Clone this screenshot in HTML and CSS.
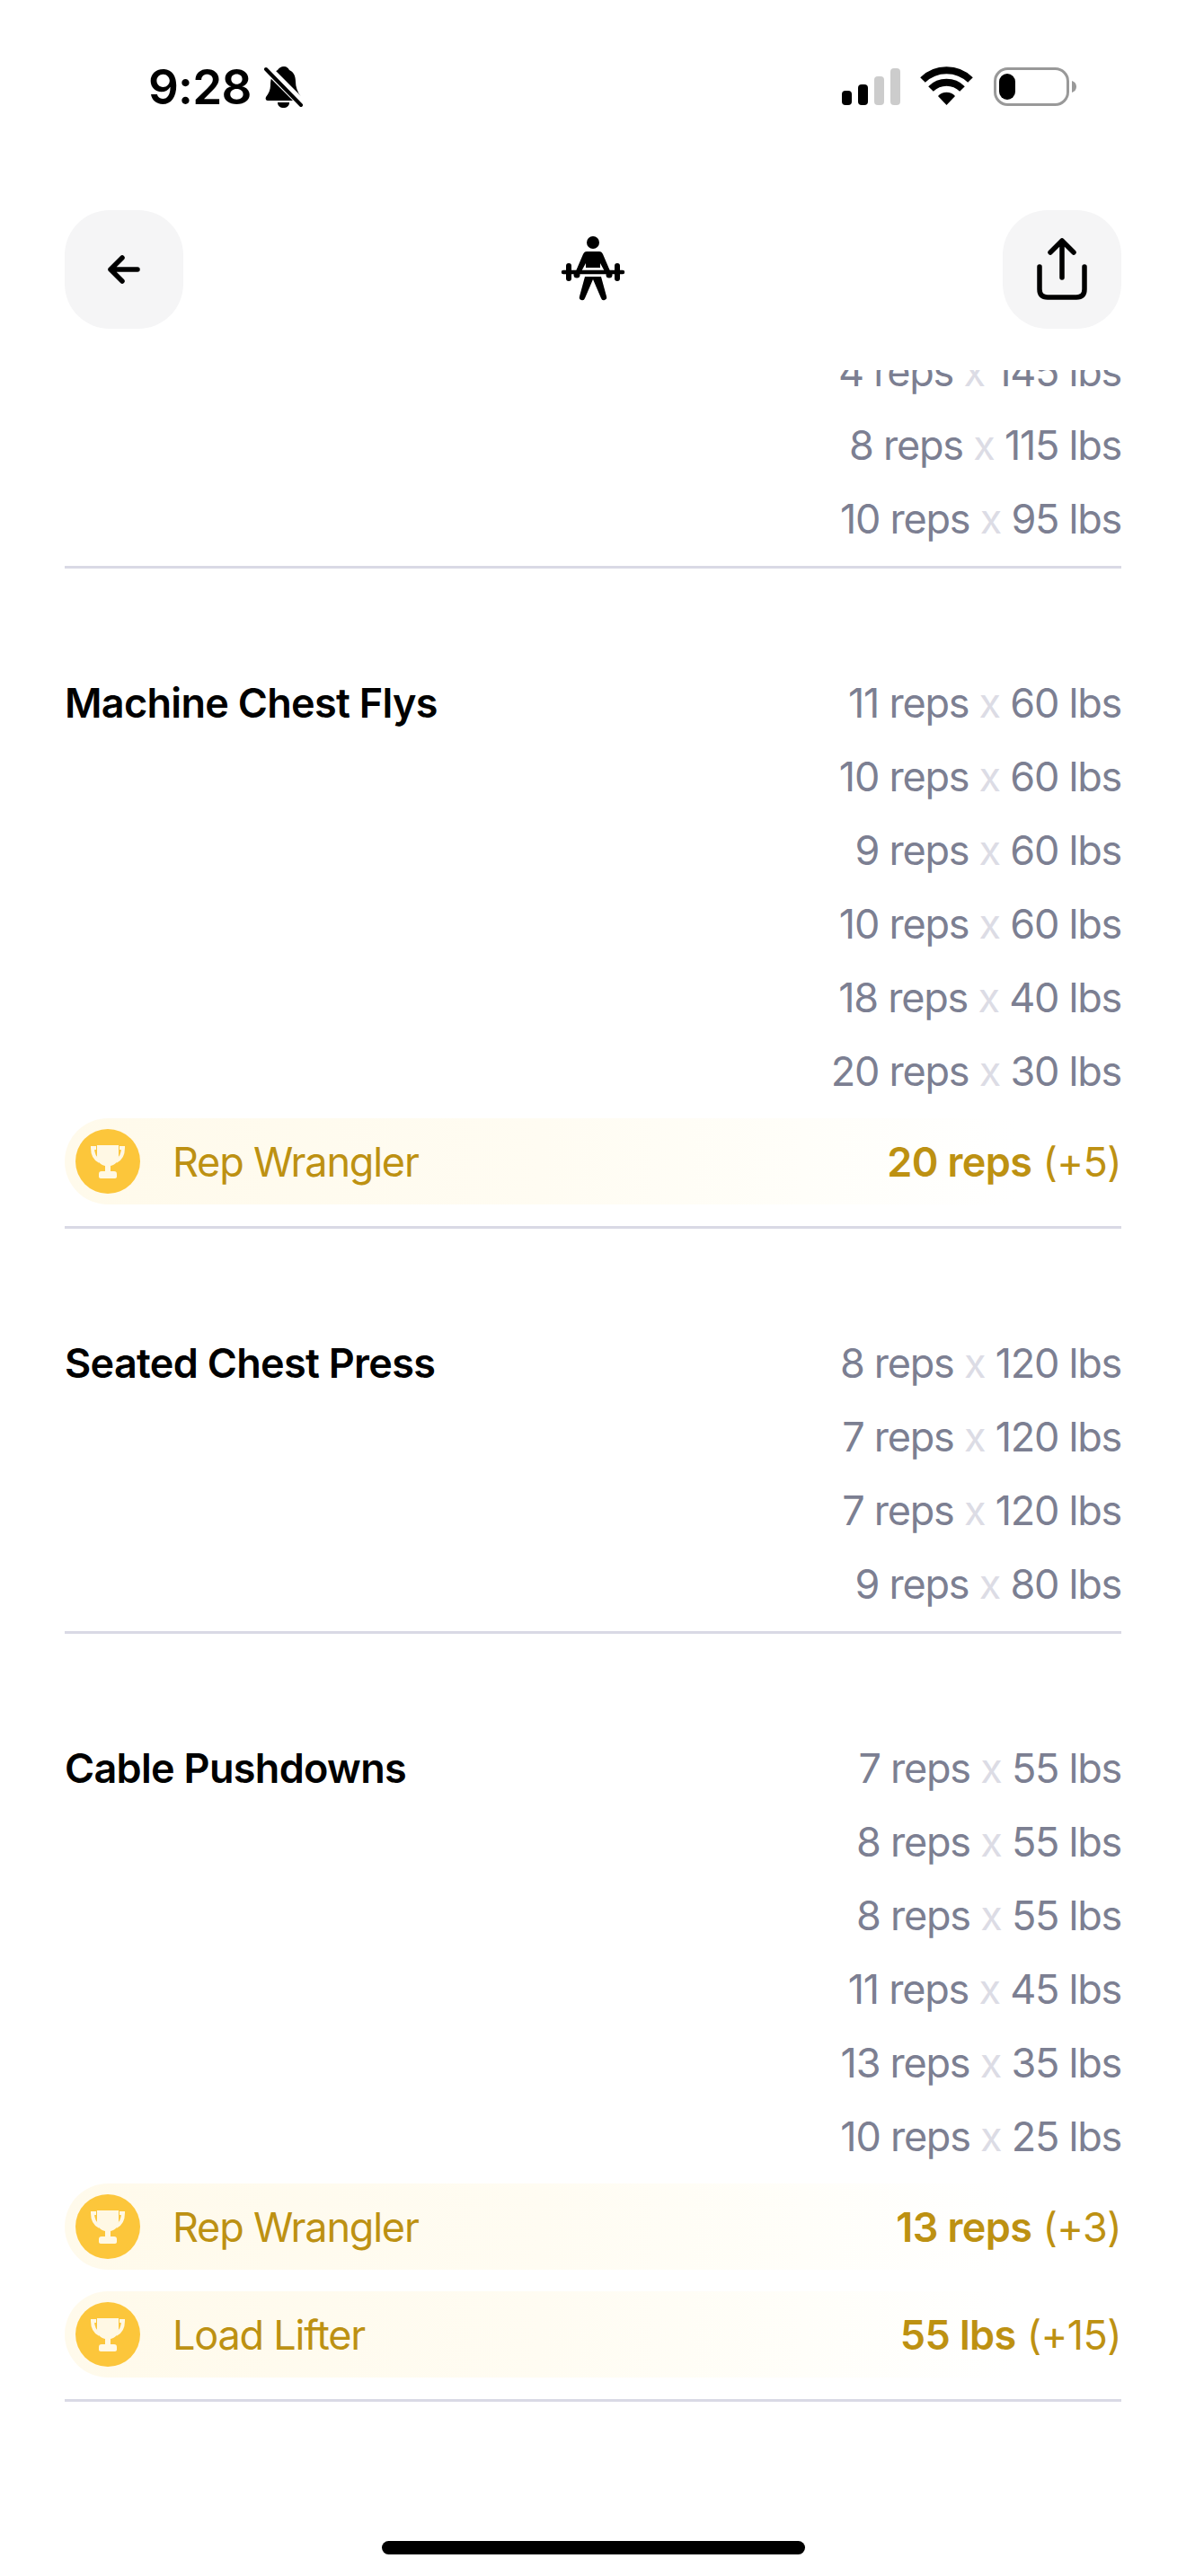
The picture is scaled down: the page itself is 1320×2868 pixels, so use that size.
FILE: index.html
```html
<!DOCTYPE html>
<html lang="en">
<head>
    <meta charset="UTF-8">
    <meta name="viewport" content="width=device-width, initial-scale=1.0">
    <title>Workout</title>
    <link rel="stylesheet" href="styles.css">
</head>
<body>
    <div class="page">
        <div class="status-bar">
            <div class="status-left">
                <span class="time">9:28</span>
                <svg class="bell" width="44" height="48" viewBox="0 0 44 48">
                    <path d="M22 1c3 0 5 2 6 4 5 2 7 7 7 13 0 6 2 11 6 17 1 2 0 4-2 4H4c-2 0-3-2-2-4 3-4 5-8 5-13 0-7 2-14 8-17 1-2 4-4 7-4z" fill="#000"/>
                    <path d="M15 41h13c0 4-3 6-6.500 6S15 45 15 41z" fill="#000"/>
                    <path d="M1 1l42 42" stroke="#fff" stroke-width="10"/>
                    <path d="M2 4l39 40" stroke="#000" stroke-width="4" stroke-linecap="round"/>
                </svg>
            </div>
            <svg class="status-right" width="262" height="50" viewBox="0 0 262 50">
                <rect x="0" y="29" width="11" height="16" rx="4" fill="#000"/>
                <rect x="18" y="22" width="11" height="23" rx="4" fill="#000"/>
                <rect x="36" y="13" width="11" height="32" rx="4" fill="#ccc"/>
                <rect x="54" y="4" width="11" height="41" rx="4" fill="#ccc"/>
                <path d="M90 17a38 38 0 0 1 53 0" fill="none" stroke="#000" stroke-width="8"/>
                <path d="M99 27a25 25 0 0 1 35 0" fill="none" stroke="#000" stroke-width="8"/>
                <path d="M107 35a13 13 0 0 1 19 0l-9.500 10z" fill="#000"/>
                <rect x="170.500" y="4.500" width="81" height="40" rx="14" fill="none" stroke="#999" stroke-width="3"/>
                <rect x="175" y="10" width="18" height="29" rx="9" fill="#000"/>
                <path d="M256 18c3 1 5 3 5 6.500s-2 5.500-5 6.500z" fill="#999"/>
            </svg>
        </div>

        <div class="top-bar">
            <button class="icon-btn">
                <svg width="44" height="36" viewBox="0 0 44 36">
                    <path d="M37 18H7M20 5L7 18l13 13" fill="none" stroke="#000" stroke-width="5.500" stroke-linecap="round" stroke-linejoin="round"/>
                </svg>
            </button>
            <svg class="lifter" width="80" height="80" viewBox="620 260 80 80">
                <circle cx="660" cy="270" r="7" fill="#000"/>
                <path d="M653 280h14c2 0 3 1 4 3l9 21h-6l-6-11v5h-16v-5l-6 11h-6l9-21c1-2 2-3 4-3z" fill="#000"/>
                <path d="M627 303h66" stroke="#000" stroke-width="4.500" stroke-linecap="round"/>
                <rect x="630" y="293" width="6" height="20" rx="3" fill="#000"/>
                <rect x="684" y="293" width="6" height="20" rx="3" fill="#000"/>
                <circle cx="642" cy="306" r="3.500" fill="#000"/>
                <circle cx="678" cy="306" r="3.500" fill="#000"/>
                <path d="M651 308h18l6 22a3 3 0 0 1-6 2l-9-21-9 21a3 3 0 0 1-6-2z" fill="#000"/>
            </svg>
            <button class="icon-btn">
                <svg width="60" height="72" viewBox="0 0 60 72">
                    <path d="M30 4v41M17 17L30 4l13 13" fill="none" stroke="#000" stroke-width="5.500" stroke-linecap="round" stroke-linejoin="round"/>
                    <path d="M5 33v25c0 6 3 9 9 9h32c6 0 9-3 9-9V33" fill="none" stroke="#000" stroke-width="5.500" stroke-linecap="round"/>
                </svg>
            </button>
        </div>

        <div class="log">
            <div class="log-inner">
                <section class="exercise">
                    <div class="exercise-main">
                        <div class="name"></div>
                        <div class="sets">
                            <div>4 reps <span class="times">x</span> 145 lbs</div>
                            <div>8 reps <span class="times">x</span> 115 lbs</div>
                            <div>10 reps <span class="times">x</span> 95 lbs</div>
                        </div>
                    </div>
                </section>

                <section class="exercise">
                    <div class="exercise-main">
                        <div class="name">Machine Chest Flys</div>
                        <div class="sets">
                            <div>11 reps <span class="times">x</span> 60 lbs</div>
                            <div>10 reps <span class="times">x</span> 60 lbs</div>
                            <div>9 reps <span class="times">x</span> 60 lbs</div>
                            <div>10 reps <span class="times">x</span> 60 lbs</div>
                            <div>18 reps <span class="times">x</span> 40 lbs</div>
                            <div>20 reps <span class="times">x</span> 30 lbs</div>
                        </div>
                    </div>
                    <div class="records">
                        <div class="record">
                            <span class="medal">
                                <svg width="40" height="38" viewBox="0 0 40 38">
                                    <path d="M8 1h24v12c0 6-4 10-9 11v6h4c2 0 3 1 3 3v3c0 1-1 2-2 2H12c-1 0-2-1-2-2v-3c0-2 1-3 3-3h4v-6C12 23 8 19 8 13z" fill="#fff8e4"/>
                                    <path d="M7 4H3c0 7 2 12 8 15M33 4h4c0 7-2 12-8 15" fill="none" stroke="#fff8e4" stroke-width="4"/>
                                </svg>
                            </span>
                            <span class="record-name">Rep Wrangler</span>
                            <span class="record-value"><b>20 reps</b> (+5)</span>
                        </div>
                    </div>
                </section>

                <section class="exercise">
                    <div class="exercise-main">
                        <div class="name">Seated Chest Press</div>
                        <div class="sets">
                            <div>8 reps <span class="times">x</span> 120 lbs</div>
                            <div>7 reps <span class="times">x</span> 120 lbs</div>
                            <div>7 reps <span class="times">x</span> 120 lbs</div>
                            <div>9 reps <span class="times">x</span> 80 lbs</div>
                        </div>
                    </div>
                </section>

                <section class="exercise">
                    <div class="exercise-main">
                        <div class="name">Cable Pushdowns</div>
                        <div class="sets">
                            <div>7 reps <span class="times">x</span> 55 lbs</div>
                            <div>8 reps <span class="times">x</span> 55 lbs</div>
                            <div>8 reps <span class="times">x</span> 55 lbs</div>
                            <div>11 reps <span class="times">x</span> 45 lbs</div>
                            <div>13 reps <span class="times">x</span> 35 lbs</div>
                            <div>10 reps <span class="times">x</span> 25 lbs</div>
                        </div>
                    </div>
                    <div class="records">
                        <div class="record">
                            <span class="medal">
                                <svg width="40" height="38" viewBox="0 0 40 38">
                                    <path d="M8 1h24v12c0 6-4 10-9 11v6h4c2 0 3 1 3 3v3c0 1-1 2-2 2H12c-1 0-2-1-2-2v-3c0-2 1-3 3-3h4v-6C12 23 8 19 8 13z" fill="#fff8e4"/>
                                    <path d="M7 4H3c0 7 2 12 8 15M33 4h4c0 7-2 12-8 15" fill="none" stroke="#fff8e4" stroke-width="4"/>
                                </svg>
                            </span>
                            <span class="record-name">Rep Wrangler</span>
                            <span class="record-value"><b>13 reps</b> (+3)</span>
                        </div>
                        <div class="record">
                            <span class="medal">
                                <svg width="40" height="38" viewBox="0 0 40 38">
                                    <path d="M8 1h24v12c0 6-4 10-9 11v6h4c2 0 3 1 3 3v3c0 1-1 2-2 2H12c-1 0-2-1-2-2v-3c0-2 1-3 3-3h4v-6C12 23 8 19 8 13z" fill="#fff8e4"/>
                                    <path d="M7 4H3c0 7 2 12 8 15M33 4h4c0 7-2 12-8 15" fill="none" stroke="#fff8e4" stroke-width="4"/>
                                </svg>
                            </span>
                            <span class="record-name">Load Lifter</span>
                            <span class="record-value"><b>55 lbs</b> (+15)</span>
                        </div>
                    </div>
                </section>
            </div>
        </div>

        <div class="home-area">
            <div class="home-bar"></div>
        </div>
    </div>
</body>
</html>
```

FILE: styles.css
```css
body {
    margin: 0;
    background-color: #ffffff;
    color: #000000;
    font-family: Inter, "Liberation Sans", sans-serif;
}

.page {
    width: 1320px;
    height: 2868px;
    display: flex;
    flex-direction: column;
    overflow: hidden;
}

/* status bar */
.status-bar {
    height: 180px;
    box-sizing: border-box;
    padding: 72px 121px 0 165px;
    display: flex;
    justify-content: space-between;
    align-items: flex-start;
}

.status-left {
    display: flex;
    align-items: center;
    gap: 14px;
}

.time {
    font-size: 53px;
    line-height: 50px;
    font-weight: 600;
    letter-spacing: -0.8px;
}

/* header */
.top-bar {
    height: 132px;
    padding: 54px 72px 46px;
    display: flex;
    justify-content: space-between;
    align-items: center;
}

.icon-btn {
    width: 132px;
    height: 132px;
    padding: 0;
    border: none;
    border-radius: 50px;
    background-color: #f5f5f6;
    display: flex;
    justify-content: center;
    align-items: center;
}

/* workout log */
.log {
    flex: 1;
    min-height: 0;
    overflow: hidden;
    padding: 0 72px;
}

.log-inner {
    margin-top: -41px;
}

.exercise {
    padding-bottom: 11px;
    margin-bottom: 107px;
    border-bottom: 3px solid #d9d9e5;
}

.exercise-main {
    padding-top: 2px;
    display: flex;
    justify-content: space-between;
}

.name {
    font-size: 45px;
    line-height: 82px;
    font-weight: 600;
    letter-spacing: -0.7px;
}

.sets {
    text-align: right;
    font-size: 45px;
    line-height: 82px;
    letter-spacing: -1.25px;
    color: #7c7f92;
}

.times {
    color: #dcdce5;
}

/* personal records */
.records {
    margin-top: 11px;
    margin-bottom: 13px;
    display: flex;
    flex-direction: column;
    gap: 24px;
}

.record {
    height: 96px;
    box-sizing: border-box;
    padding-left: 12px;
    display: flex;
    align-items: center;
    border-radius: 48px;
    background: linear-gradient(90deg, #fffaeb 0%, #fffcf2 45%, #fffef9 70%, #ffffff 90%);
    color: #bd9112;
    font-size: 45px;
}

.medal {
    width: 72px;
    height: 72px;
    margin-right: 36px;
    border-radius: 50%;
    background-color: #fcc63b;
    display: flex;
    justify-content: center;
    align-items: center;
}

.record-name {
    letter-spacing: -1.2px;
}

.record-value {
    margin-left: auto;
    letter-spacing: -0.6px;
}

.record-value b {
    font-weight: 600;
}

/* home indicator */
.home-area {
    height: 39px;
    display: flex;
    justify-content: center;
}

.home-bar {
    width: 471px;
    height: 15px;
    border-radius: 8px;
    background-color: #000000;
}
```
